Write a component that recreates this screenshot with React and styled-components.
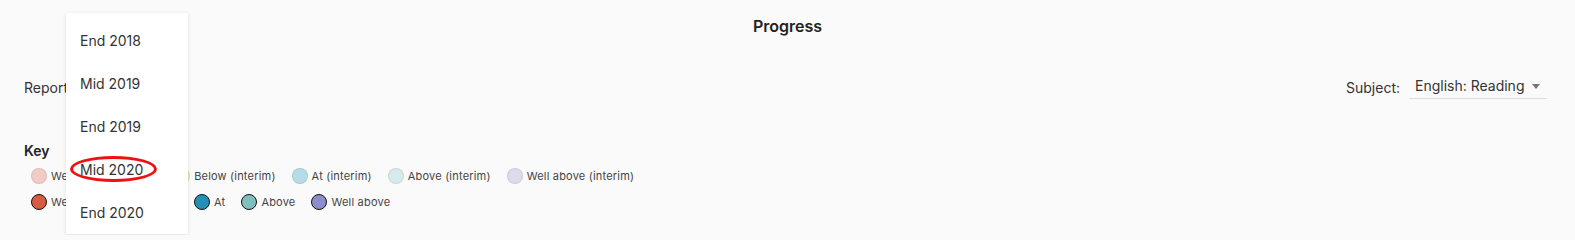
import * as React from "react";
import styled, { createGlobalStyle } from "styled-components";

const GlobalStyle = createGlobalStyle`
  html, body {
    margin: 0;
    padding: 0;
    background-color: #fafafa;
  }
  body {
    font-family: Inter, "Noto Sans", sans-serif;
    color: #333;
  }
`;

const StylePage = styled.div`
  position: relative;
  height: 235px;
  overflow: hidden;
  padding: 0 24px;
`;

const StyleTitle = styled.h1`
  margin: 0;
  padding-top: 16px;
  height: 20px;
  text-align: center;
  font-size: 16px;
  font-weight: 600;
  color: #222;
`;

const StyleControls = styled.div`
  display: flex;
  flex-flow: row nowrap;
  justify-content: space-between;
  align-items: center;
  margin-top: 39px;
  height: 24px;
  padding-right: 4px;
`;

const StyleField = styled.div`
  display: flex;
  align-items: center;
  gap: 9px;
  font-size: 14px;
  color: #333;
  white-space: nowrap;
`;

const StyleSelect = styled.div`
  position: relative;
  flex-shrink: 0;
  width: ${({ width }) => width}px;
  box-sizing: border-box;
  padding: 0 24px 0 6px;
  height: 24px;
  line-height: 22px;
  border-bottom: 1px solid #dcdcdc;
  color: #333;
  white-space: nowrap;

  &::after {
    content: "";
    position: absolute;
    right: 7px;
    top: 9px;
    border-left: 4px solid transparent;
    border-right: 4px solid transparent;
    border-top: 5px solid #757575;
  }
`;

const StyleKey = styled.div`
  margin-top: 43px;
  font-size: 14px;
  font-weight: 600;
  color: #222;
`;

const StyleLegend = styled.div`
  display: flex;
  flex-flow: column nowrap;
  gap: 10px;
  margin-top: 9px;
  padding-left: 7px;
`;

const StyleLegendRow = styled.div`
  display: flex;
  flex-flow: row nowrap;
  align-items: center;
  gap: 16px;
`;

const StyleLegendItem = styled.div`
  display: flex;
  align-items: center;
  gap: 4px;
  font-size: 11px;
  letter-spacing: 0.2px;
  color: #444;
  white-space: nowrap;
`;

const StyleDot = styled.span`
  display: inline-block;
  width: 16px;
  height: 16px;
  box-sizing: border-box;
  border-radius: 50%;
  background-color: ${({ color }) => color};
  border: 1px solid ${({ $interim }) => ($interim ? "rgba(0,0,0,0.08)" : "#111")};
`;

const StyleMenu = styled.ul`
  position: absolute;
  left: 66px;
  top: 13px;
  width: 122px;
  margin: 0;
  padding: 6px 0 0;
  list-style: none;
  background-color: white;
  box-shadow: 0 1px 4px rgba(0, 0, 0, 0.12);
  border-radius: 2px;
`;

const StyleMenuItem = styled.li`
  position: relative;
  height: 43px;
  line-height: 43px;
  padding-left: 14px;
  font-size: 14px;
  color: #333;
`;

const StyleHighlight = styled.span`
  position: absolute;
  left: 4px;
  top: 8px;
  width: 87px;
  height: 26px;
  box-sizing: border-box;
  border: 3px solid #ee1111;
  border-radius: 50%;
`;

const interimKey = [
  { label: "Well below (interim)", color: "#f2cbc7" },
  { label: "Below (interim)", color: "#f5e3c4" },
  { label: "At (interim)", color: "#b7dce5" },
  { label: "Above (interim)", color: "#d7eaea" },
  { label: "Well above (interim)", color: "#dddbeb" },
];

const finalKey = [
  { label: "Well below", color: "#d95a40" },
  { label: "Below", color: "#f0b65a" },
  { label: "At", color: "#2290b4" },
  { label: "Above", color: "#7fbfbf" },
  { label: "Well above", color: "#8d8ccc" },
];

const reports = ["End 2018", "Mid 2019", "End 2019", "Mid 2020", "End 2020"];

function LegendRow({ items, interim }) {
  return (
    <StyleLegendRow>
      {items.map((item) => (
        <StyleLegendItem key={item.label}>
          <StyleDot color={item.color} $interim={interim} />
          <span>{item.label}</span>
        </StyleLegendItem>
      ))}
    </StyleLegendRow>
  );
}

export default function App() {
  const selected = "Mid 2020";
  return (
    <>
      <GlobalStyle />
      <StylePage>
        <StyleTitle>Progress</StyleTitle>
        <StyleControls>
          <StyleField>
            <span>Report:</span>
            <StyleSelect width={100}>{selected}</StyleSelect>
          </StyleField>
          <StyleField>
            <span>Subject:</span>
            <StyleSelect width={138}>English: Reading</StyleSelect>
          </StyleField>
        </StyleControls>
        <StyleKey>Key</StyleKey>
        <StyleLegend>
          <LegendRow items={interimKey} interim />
          <LegendRow items={finalKey} />
        </StyleLegend>
        <StyleMenu>
          {reports.map((r) => (
            <StyleMenuItem key={r}>
              {r === selected && <StyleHighlight />}
              {r}
            </StyleMenuItem>
          ))}
        </StyleMenu>
      </StylePage>
    </>
  );
}
